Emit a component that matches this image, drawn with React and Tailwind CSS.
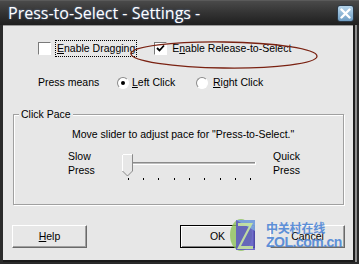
import React from "react";

const font = { fontFamily: '"Liberation Sans", Arial, sans-serif' };

function CheckBox({ checked }) {
  return (
    <div className="w-[13px] h-[13px] shrink-0 border border-t-[#7a7a7a] border-l-[#7a7a7a] border-b-white border-r-white bg-white flex items-center justify-center">
      {checked && (
        <svg width="9" height="9" viewBox="0 0 9 9">
          <polyline points="1,4 3.5,6.5 8,1.5" fill="none" stroke="#000" strokeWidth="1.8" />
        </svg>
      )}
    </div>
  );
}

function Radio({ checked }) {
  return (
    <div className="w-[12px] h-[12px] shrink-0 rounded-full border border-t-[#8a8a8a] border-l-[#8a8a8a] border-b-white border-r-white bg-white flex items-center justify-center">
      {checked && <div className="w-[4px] h-[4px] rounded-full bg-black" />}
    </div>
  );
}

function Btn({ children, primary }) {
  return (
    <div
      className={`w-[75px] h-[23px] flex items-center justify-center text-[10.5px] text-black ${
        primary
          ? "border border-black shadow-[inset_1px_1px_0_#fff,inset_-1px_-1px_0_#808080]"
          : "border border-t-white border-l-white border-b-[#6a6a6a] border-r-[#6a6a6a] shadow-[inset_-1px_-1px_0_#a0a0a0]"
      }`}
    >
      {children}
    </div>
  );
}

function Slider() {
  const ticks = [0, 1, 2, 3, 4, 5, 6, 7, 8].map((i) => 6.7 + i * 15.3);
  return (
    <svg width="137" height="32" viewBox="0 0 137 32" className="shrink-0">
      <rect x="4" y="13" width="131" height="1" fill="#8a8a8a" />
      <rect x="4" y="14" width="131" height="1" fill="#404040" opacity="0.25" />
      <rect x="4" y="15" width="131" height="1" fill="#ffffff" />
      <rect x="134" y="13" width="1" height="3" fill="#ffffff" />
      {ticks.map((x, i) => (
        <rect key={i} x={Math.round(x)} y="29" width="1" height="2" fill="#000" />
      ))}
      <path d="M1.5 5.5 H11.5 V22 L6.5 27 L1.5 22 Z" fill="#e7e7e7" stroke="#8a8a8a" />
      <path d="M1.5 22 V5.5 H11" fill="none" stroke="#ffffff" />
    </svg>
  );
}

export default function App() {
  return (
    <div className="w-[359px] h-[264px] relative overflow-hidden bg-[#2a2a2a] flex flex-col" style={font}>
      {/* title bar */}
      <div className="h-[25px] shrink-0 flex items-center justify-between pl-[8px] pr-[5px] bg-gradient-to-b from-[#4a4a4a] via-[#333333] to-[#1f1f1f] border-t border-[#5a5a5a]">
        <span
          className="text-white text-[16px] leading-none"
          style={{ fontFamily: '"Open Sans", "Liberation Sans", sans-serif', textShadow: "0 0 2px rgba(120,170,255,0.6)" }}
        >
          Press-to-Select - Settings -
        </span>
        <div className="w-[17px] h-[17px] rounded-[3px] border border-[#2c3a48] bg-gradient-to-b from-[#b6d4ea] to-[#6f9ec4] flex items-center justify-center">
          <svg width="11" height="11" viewBox="0 0 11 11">
            <path d="M1.5 1.5 L9.5 9.5 M9.5 1.5 L1.5 9.5" stroke="#fff" strokeWidth="2.4" strokeLinecap="round" />
          </svg>
        </div>
      </div>

      {/* frame + body */}
      <div className="flex-1 flex pl-[3px] pb-[2px]">
        <div className="flex-1 bg-[#e7e7e7] border-t border-[#9a9a9a] border-b-2 border-b-[#1a1a1a] flex flex-col text-[10.5px] text-black">
          {/* row 1 */}
          <div className="flex items-center h-[17px] mt-[14px] pl-[35px]">
            <CheckBox />
            <div className="ml-[4px] h-[17px] px-[1px] flex items-center border border-dotted border-black">
              <span><span className="underline">E</span>nable Dragging</span>
            </div>
            <div className="ml-[17px]">
              <CheckBox checked />
            </div>
            <span className="ml-[5px]">E<span className="underline">n</span>able Release-to-Select</span>
          </div>

          {/* row 2 */}
          <div className="flex items-center h-[17px] mt-[17px] pl-[35px]">
            <span className="w-[79px]">Press means</span>
            <Radio checked />
            <span className="ml-[3px] w-[64px]"><span className="underline">L</span>eft Click</span>
            <Radio />
            <span className="ml-[5px]"><span className="underline">R</span>ight Click</span>
          </div>

          {/* group */}
          <div className="relative ml-[10px] mt-[23px] w-[331px] h-[91px] border border-[#a0a0a0] shadow-[inset_1px_1px_0_#fff,1px_1px_0_#fff]">
            <span className="absolute -top-[8px] left-[5px] px-[2px] bg-[#e7e7e7] leading-[14px]">Click Pace</span>
            <div className="pt-[12px] pl-[58px] leading-[14px]">Move slider to adjust pace for "Press-to-Select."</div>
            <div className="flex mt-[8px] pl-[54px] leading-[14px]">
              <div className="w-[53px] flex flex-col">
                <span>Slow</span>
                <span>Press</span>
              </div>
              <Slider />
              <div className="ml-[13px] w-[31px] flex flex-col items-center">
                <span>Quick</span>
                <span>Press</span>
              </div>
            </div>
          </div>

          {/* buttons */}
          <div className="flex mt-[20px] pl-[9px]">
            <Btn><span><span className="underline">H</span>elp</span></Btn>
            <div className="ml-[93px]">
              <Btn primary>OK</Btn>
            </div>
            <div className="ml-[15px]">
              <Btn>Cancel</Btn>
            </div>
          </div>
        </div>
        <div className="w-[6px] shrink-0 flex">
          <div className="w-[2px] bg-[#1e1e1e]" />
          <div className="w-[2px] bg-[#8c8c8c]" />
          <div className="w-[2px] bg-[#2a2a2a]" />
        </div>
      </div>

      {/* annotation ellipse */}
      <svg className="absolute left-0 top-0 pointer-events-none" width="359" height="264">
        <ellipse cx="224" cy="55" rx="93" ry="13" fill="none" stroke="#7a2212" strokeWidth="1.3" transform="rotate(0.8 224 55)" />
      </svg>

      {/* watermark */}
      <div className="absolute left-[229px] top-[217px] flex items-center pointer-events-none">
        <svg width="28" height="36" viewBox="0 0 28 36">
          <ellipse cx="12" cy="18" rx="11" ry="16" fill="#8fc25c" opacity="0.8" />
          <polygon points="7,3 26,3 26,33 7,33" fill="#5a56c4" opacity="0.85" />
          <polygon points="7,3 26,3 26,14" fill="#7fb0e0" opacity="0.8" />
          <polygon points="9,6 24,6 12,29 24,29 24,32 8,32 20,9 9,9" fill="#c8e6a0" opacity="0.9" />
        </svg>
        <div className="ml-[9px] flex flex-col leading-none text-[#4f86d6] opacity-90">
          <span className="text-[12px] font-bold tracking-[-0.2px]" style={{ fontFamily: '"Noto Sans CJK SC", sans-serif' }}>
            中关村在线
          </span>
          <span className="text-[14px] font-bold tracking-[-0.5px] mt-[1px]" style={{ fontFamily: '"Liberation Sans", sans-serif' }}>
            ZOL.com.cn
          </span>
        </div>
      </div>
    </div>
  );
}
